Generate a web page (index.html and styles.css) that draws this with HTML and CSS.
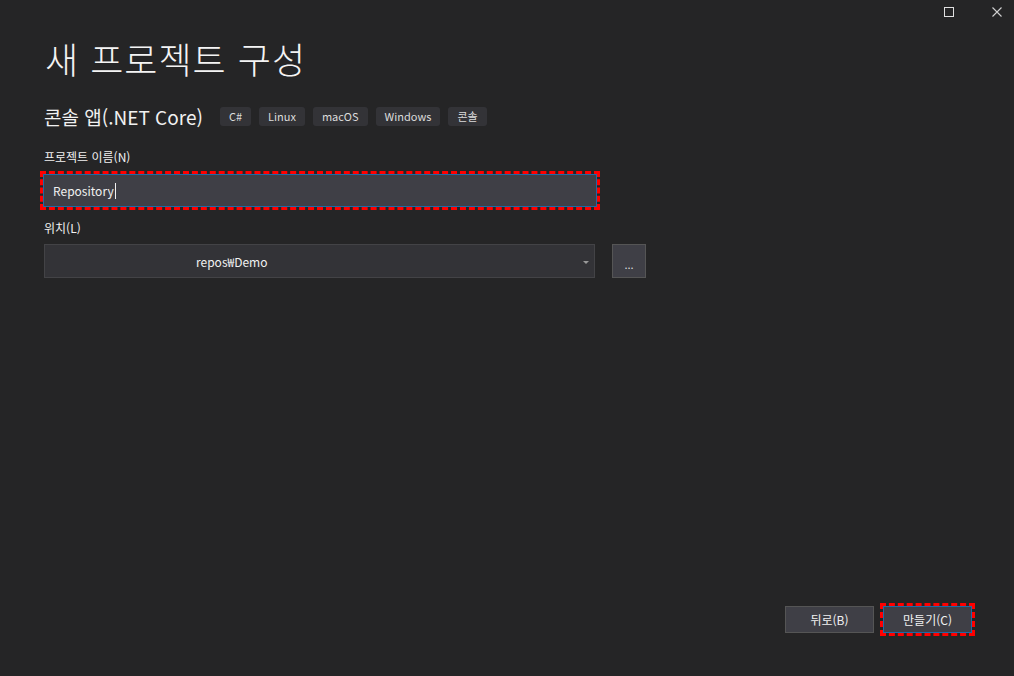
FILE: index.html
```html
<!DOCTYPE html>
<html lang="ko">
<head>
<meta charset="utf-8">
<title>새 프로젝트 구성</title>
<link rel="stylesheet" href="styles.css">
</head>
<body>
<div class="window">
  <div class="titlebar">
    <span class="ctl ctl-max"><svg width="10" height="10" viewBox="0 0 10 10"><rect x="0.5" y="0.5" width="9" height="9" fill="none" stroke="#e0e0e0" stroke-width="1"/></svg></span>
    <span class="ctl ctl-close"><svg width="10" height="10" viewBox="0 0 10 10"><path d="M0.5 0.5 L9.5 9.5 M9.5 0.5 L0.5 9.5" stroke="#d0d0d0" stroke-width="1.1" fill="none"/></svg></span>
  </div>
  <main class="content">
    <h1 class="title">새 프로젝트 구성</h1>
    <div class="subtitle-row">
      <span class="subtitle">콘솔 앱(.NET Core)</span>
      <span class="tags">
        <span class="tag">C#</span>
        <span class="tag">Linux</span>
        <span class="tag">macOS</span>
        <span class="tag">Windows</span>
        <span class="tag">콘솔</span>
      </span>
    </div>
    <label class="field-label">프로젝트 이름(N)</label>
    <div class="textbox focus-ring"><span class="value">Repository</span><span class="caret"></span></div>
    <label class="field-label loc-label">위치(L)</label>
    <div class="loc-row">
      <div class="combo"><span class="combo-text">repos₩Demo</span><span class="arrow"></span></div>
      <div class="browse">...</div>
    </div>
  </main>
  <footer class="footer">
    <div class="btn">뒤로(B)</div>
    <div class="btn btn-primary focus-ring">만들기(C)</div>
  </footer>
</div>
</body>
</html>
```
FILE: styles.css
```css
html, body {
  margin: 0;
  padding: 0;
  background: #252526;
}
body {
  font-family: "Noto Sans CJK KR", "Noto Sans", sans-serif;
  color: #f1f1f1;
}
.window {
  height: 676px;
  width: 1014px;
  display: flex;
  flex-direction: column;
  overflow: hidden;
}
.titlebar {
  height: 24px;
  display: flex;
  justify-content: flex-end;
  align-items: flex-start;
  gap: 38px;
  padding: 7px 12px 0 0;
  box-sizing: border-box;
}
.ctl {
  width: 10px;
  height: 10px;
  display: block;
}
.ctl svg { display: block; }
.content {
  flex: 1;
  padding: 0 0 0 44px;
}
.title {
  margin: 8px 0 0 1px;
  font-size: 36px;
  font-weight: 300;
  line-height: 52px;
  letter-spacing: 1px;
  color: #f4f4f4;
}
.subtitle-row {
  display: flex;
  align-items: center;
  margin-top: 18px;
  height: 28px;
}
.subtitle {
  font-size: 19px;
  font-weight: 400;
  color: #f1f1f1;
  margin-right: 17px;
}
.tags {
  display: flex;
  gap: 8px;
}
.tag {
  background: #333337;
  color: #dcdcdc;
  font-size: 11px;
  height: 19px;
  line-height: 19px;
  padding: 0 9px;
  border-radius: 3px;
}
.field-label {
  display: block;
  font-size: 12px;
  color: #f1f1f1;
  margin-top: 18px;
  line-height: 18px;
}
.loc-label {
  margin-top: 12px;
}
.textbox {
  margin-top: 8px;
  width: 554px;
  height: 33px;
  box-sizing: border-box;
  background: #3f3f46;
  border: 1px solid #1c6aa8;
  display: flex;
  align-items: center;
  padding-left: 9px;
  font-size: 12px;
  color: #f1f1f1;
  margin-left: -1px;
}
.focus-ring {
  outline: 3px dashed #ff0000;
  outline-offset: 0;
}
.caret {
  width: 1px;
  height: 16px;
  background: #f1f1f1;
  margin-left: 1px;
}
.loc-row {
  display: flex;
  gap: 17px;
  margin-top: 7px;
}
.combo {
  width: 551px;
  height: 34px;
  box-sizing: border-box;
  background: #333337;
  border: 1px solid #434346;
  display: flex;
  align-items: center;
  justify-content: space-between;
  padding: 0 5px 0 151px;
  font-size: 12px;
  color: #f1f1f1;
}
.arrow {
  width: 0;
  height: 0;
  border-left: 3px solid transparent;
  border-right: 3px solid transparent;
  border-top: 3px solid #999999;
  margin-top: 2px;
}
.browse {
  width: 34px;
  height: 34px;
  box-sizing: border-box;
  background: #3f3f46;
  border: 1px solid #555555;
  color: #dcdcdc;
  font-size: 11px;
  display: flex;
  justify-content: center;
  align-items: flex-end;
  padding-bottom: 7px;
  line-height: 1;
}
.footer {
  display: flex;
  justify-content: flex-end;
  gap: 9px;
  padding: 0 42px 43px 0;
}
.btn {
  width: 89px;
  height: 27px;
  box-sizing: border-box;
  background: #3f3f46;
  border: 1px solid #555555;
  color: #f1f1f1;
  font-size: 12px;
  display: flex;
  align-items: center;
  justify-content: center;
}
.btn-primary {
  width: 89px;
  border-color: #1c6aa8;
}
```
